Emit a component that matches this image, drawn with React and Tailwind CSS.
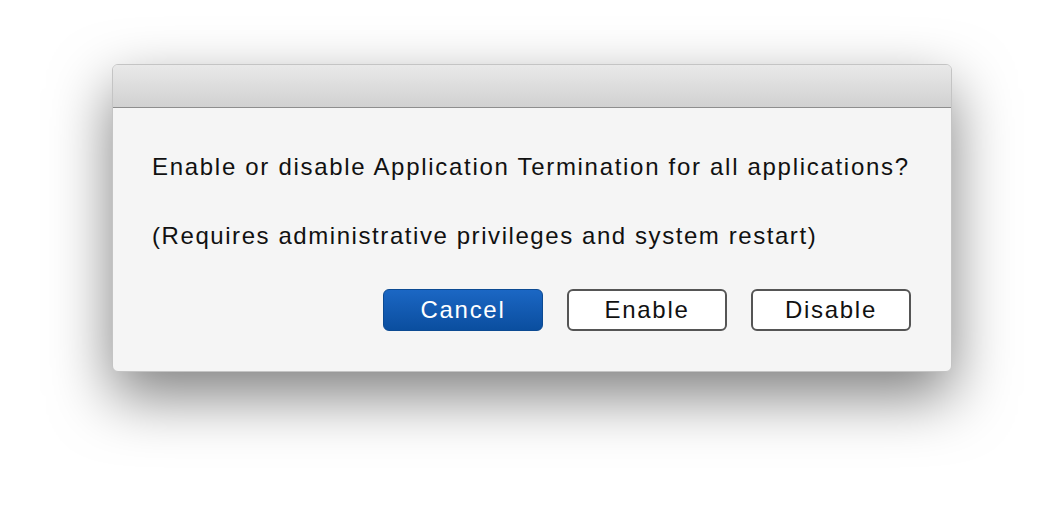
import React from "react";

const App = () => {
  return (
    <div className="w-[1064px] h-[532px] bg-white overflow-hidden pt-[64px] pl-[112px] font-['Liberation_Sans',Arial,sans-serif]">
      <div className="w-[840px] rounded-[6px] bg-[#f5f5f5] border border-[#c4c4c4] shadow-[0_24px_60px_rgba(0,0,0,0.5)] overflow-hidden">
        <div className="h-[43px] bg-gradient-to-b from-[#e9e9e9] to-[#d1d1d1] border-b border-[#8e8e8e]"></div>
        <div className="pl-[39px] pr-[40px] pt-[45px] pb-[40px] text-[#111] tracking-[1.7px]">
          <p className="text-[24px] leading-[28px]">
            Enable or disable Application Termination for all applications?
          </p>
          <p className="text-[24px] leading-[28px] mt-[41px] tracking-[1.57px]">
            (Requires administrative privileges and system restart)
          </p>
          <div className="flex justify-end gap-[24px] mt-[39px]">
            <button className="w-[160px] h-[42px] rounded-[6px] bg-gradient-to-b from-[#1b67c4] to-[#0a4e9f] border border-[#0c4a92] text-white text-[24px]">
              Cancel
            </button>
            <button className="w-[160px] h-[42px] rounded-[6px] bg-white border-2 border-[#555] text-[#111] text-[24px]">
              Enable
            </button>
            <button className="w-[160px] h-[42px] rounded-[6px] bg-white border-2 border-[#555] text-[#111] text-[24px]">
              Disable
            </button>
          </div>
        </div>
      </div>
    </div>
  );
};

export default App;
